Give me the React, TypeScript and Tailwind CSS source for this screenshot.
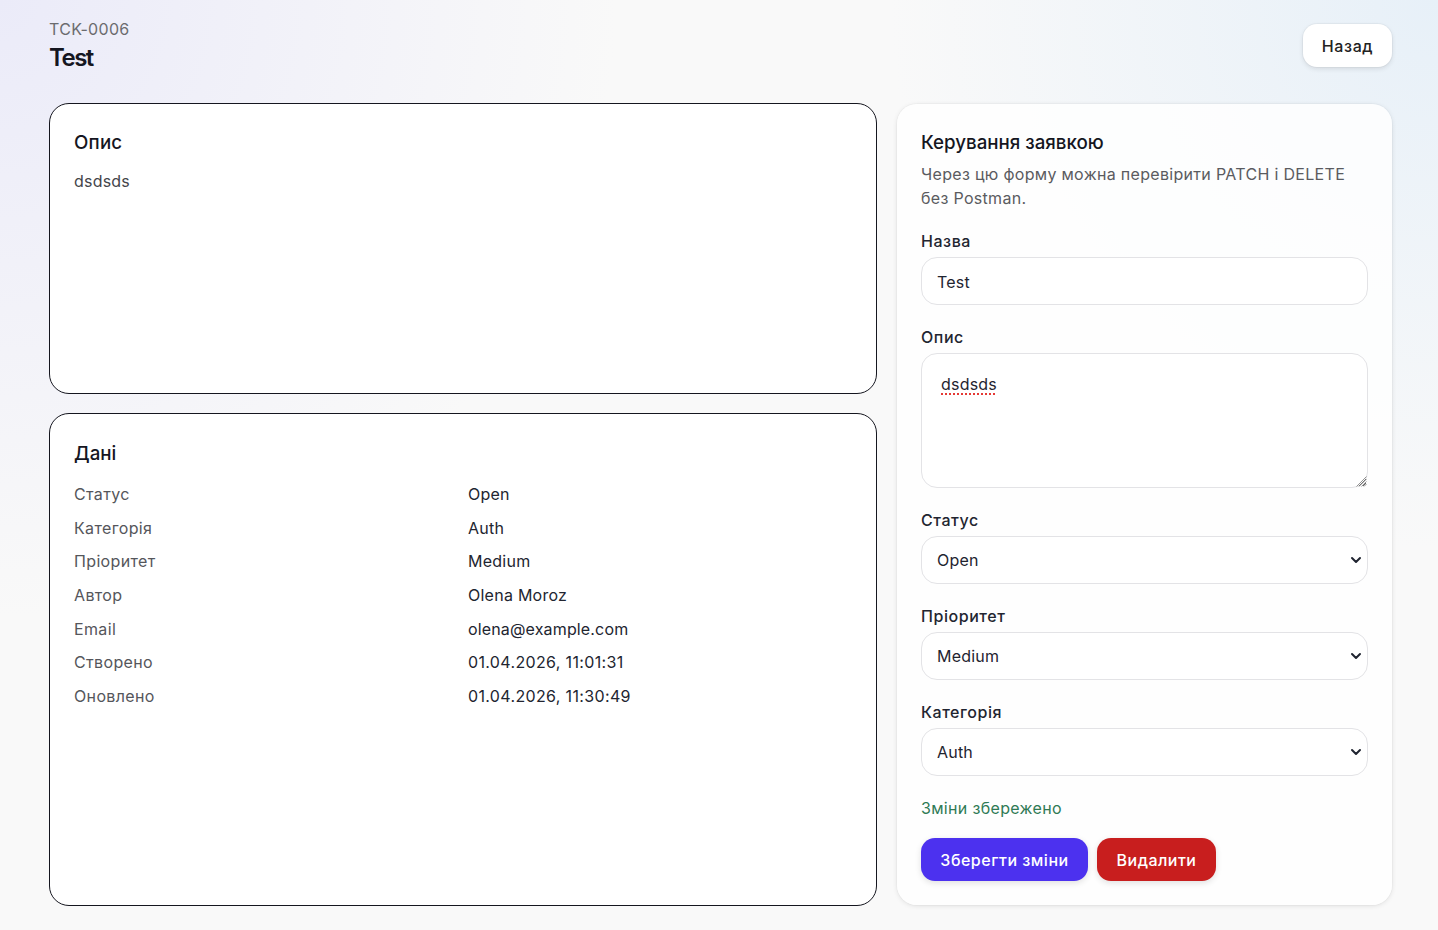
import { ChevronDown } from "lucide-react";

const rows = [
  ["Статус", "Open", "tracking-[0.25px]"],
  ["Категорія", "Auth", "tracking-[0.25px]"],
  ["Пріоритет", "Medium", "tracking-[0.25px]"],
  ["Автор", "Olena Moroz", "tracking-[0.25px]"],
  ["Email", "olena@example.com", "tracking-[0.15px]"],
  ["Створено", "01.04.2026, 11:01:31", "tracking-[0.35px]"],
  ["Оновлено", "01.04.2026, 11:30:49", "tracking-[0.35px]"],
];

const inputClass =
  "block h-[48px] w-full appearance-none rounded-[16px] border border-[#e3e3e6] bg-white px-[15px] text-[16px] tracking-[0.2px] text-[#1f2430] outline-none";

const labelClass = "mb-[4px] block h-[24px] text-[16px] leading-[24px] font-[450] tracking-[0.55px] text-[#222530]";

function Select({ label, value }: { label: string; value: string }) {
  return (
    <label className="block">
      <span className={labelClass}>{label}</span>
      <span className="relative block">
        <select defaultValue={value} className={inputClass}>
          <option>{value}</option>
        </select>
        <ChevronDown className="pointer-events-none absolute top-[16px] right-[4px] h-[16px] w-[16px] text-[#1f2430]" strokeWidth={3} />
      </span>
    </label>
  );
}

export default function App() {
  return (
    <div className="min-h-[930px] bg-[#f9f9f9] bg-[radial-gradient(circle_at_top_left,#ebebf9,transparent_36%),radial-gradient(circle_at_top_right,#e7f0f8,transparent_32%)] pt-[16px] pr-[46px] pl-[49px] font-['Inter',sans-serif] text-[#15161f]">
      <header className="flex h-[59px] items-center justify-between">
        <div>
          <p className="text-[16px] leading-[24px] tracking-[0.3px] text-[#6b6b6e]">TCK-0006</p>
          <h1 className="text-[24px] leading-[34px] font-semibold tracking-[-1.5px] text-[#15161f]">Test</h1>
        </div>
        <button className="h-[43px] w-[89px] rounded-[14px] bg-white text-[16px] font-[450] tracking-[0.6px] text-[#222] shadow-[0_0_0_1px_rgba(0,0,0,0.03),0_2px_5px_rgba(0,0,0,0.1)]">
          Назад
        </button>
      </header>

      <main className="mt-[28px] grid grid-cols-[828px_495px] gap-x-[20px]">
        <div className="flex h-[803px] flex-col gap-[19px]">
          <section className="h-[291px] rounded-[20px] border border-[#15161f] bg-white px-[24px] pt-[24px]">
            <h2 className="text-[18.72px] leading-[30px] font-medium tracking-[0.2px] text-[#15161f]">Опис</h2>
            <p className="mt-[11px] text-[16px] leading-[24px] tracking-[0.2px] text-[#44454a]">dsdsds</p>
          </section>
          <section className="h-[493px] rounded-[20px] border border-[#15161f] bg-white px-[24px] pt-[25px]">
            <h2 className="text-[18.72px] leading-[30px] font-medium text-[#15161f]">Дані</h2>
            <dl className="mt-[8px]">
              {rows.map(([k, v, t]) => (
                <div key={k} className="grid h-[33.7px] grid-cols-[394px_1fr] items-center text-[16px]">
                  <dt className="tracking-[0.35px] text-[#55565b]">{k}</dt>
                  <dd className={`text-[#222530] ${t}`}>{v}</dd>
                </div>
              ))}
            </dl>
          </section>
        </div>

        <section className="mt-[1px] h-[801px] rounded-[20px] bg-white/85 px-[24px] pt-[24px] shadow-[0_0_0_1px_rgba(0,0,0,0.02),0_1px_5px_rgba(0,0,0,0.1)]">
          <h2 className="text-[18.72px] leading-[30px] font-medium text-[#15161f]">Керування заявкою</h2>
          <p className="mt-[4px] text-[16px] leading-[24px] tracking-[0.31px] text-[#5a5b60]">
            Через цю форму можна перевірити PATCH і DELETE без Postman.
          </p>
          <label className="mt-[19px] block">
            <span className={labelClass}>Назва</span>
            <input defaultValue="Test" className={`${inputClass} pt-[2px]`} />
          </label>
          <label className="mt-[20px] block">
            <span className={labelClass}>Опис</span>
            <span className="relative block">
              <textarea
                defaultValue="dsdsds"
                className="block h-[135px] w-full rounded-[16px] border border-[#e3e3e6] bg-white px-[19px] py-[18px] text-[16px] leading-[24px] tracking-[0.2px] text-[#1f2430] underline decoration-[#e53935] decoration-dotted decoration-2 underline-offset-[3px] outline-none"
              />
              <svg className="pointer-events-none absolute right-[1px] bottom-[1px] h-[11px] w-[11px]" viewBox="0 0 11 11" stroke="#8a8a8a" strokeWidth="0.9">
                <path d="M0.5 10.5 L10.5 0.5 M3 10.5 L10.5 3 M5.5 10.5 L10.5 5.5 M8 10.5 L10.5 8" />
              </svg>
            </span>
          </label>
          <div className="mt-[20px] flex flex-col gap-[20px]">
            <Select label="Статус" value="Open" />
            <Select label="Пріоритет" value="Medium" />
            <Select label="Категорія" value="Auth" />
          </div>
          <p className="mt-[20px] text-[16px] leading-[24px] tracking-[0.33px] text-[#2f7a55]">Зміни збережено</p>
          <div className="mt-[18px] flex gap-[9px]">
            <button className="h-[43px] w-[167px] rounded-[14px] bg-[#4c31ef] text-[16px] font-[450] tracking-[0.5px] text-white shadow-[0_2px_6px_rgba(0,0,0,0.12)]">
              Зберегти зміни
            </button>
            <button className="h-[43px] w-[119px] rounded-[14px] bg-[#c81e1e] text-[16px] font-[450] tracking-[0.5px] text-white shadow-[0_2px_6px_rgba(0,0,0,0.12)]">
              Видалити
            </button>
          </div>
        </section>
      </main>
    </div>
  );
}
